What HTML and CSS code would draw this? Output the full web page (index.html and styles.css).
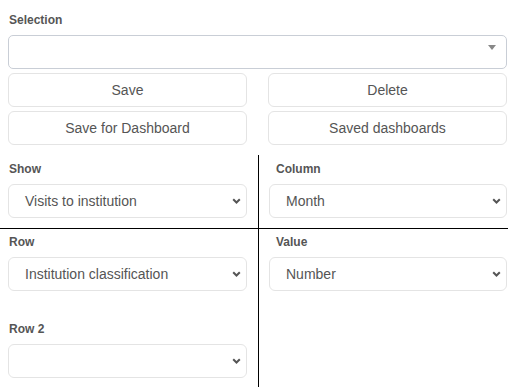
FILE: index.html
```html
<!DOCTYPE html>
<html lang="en">
<head>
    <meta charset="UTF-8">
    <meta name="viewport" content="width=device-width, initial-scale=1.0">
    <title>Report settings</title>
    <link rel="stylesheet" href="styles.css">
</head>
<body>
    <div class="top">
        <label class="field-label">Selection</label>
        <div class="combo">
            <span class="combo-arrow"></span>
        </div>
        <div class="buttons">
            <button class="btn">Save</button>
            <button class="btn">Delete</button>
            <button class="btn">Save for Dashboard</button>
            <button class="btn">Saved dashboards</button>
        </div>
    </div>

    <div class="pivot">
        <div class="cell cell-left cell-first">
            <label class="field-label">Show</label>
            <div class="dropdown">
                <span class="dropdown-text">Visits to institution</span>
                <svg class="chevron" width="9" height="6" viewBox="0 0 9 6"><polyline points="1.2,1.2 4.5,4.5 7.8,1.2" fill="none" stroke="#555" stroke-width="2"/></svg>
            </div>
        </div>
        <div class="cell cell-right cell-first">
            <label class="field-label">Column</label>
            <div class="dropdown">
                <span class="dropdown-text">Month</span>
                <svg class="chevron" width="9" height="6" viewBox="0 0 9 6"><polyline points="1.2,1.2 4.5,4.5 7.8,1.2" fill="none" stroke="#555" stroke-width="2"/></svg>
            </div>
        </div>
        <div class="cell cell-left">
            <label class="field-label">Row</label>
            <div class="dropdown">
                <span class="dropdown-text">Institution classification</span>
                <svg class="chevron" width="9" height="6" viewBox="0 0 9 6"><polyline points="1.2,1.2 4.5,4.5 7.8,1.2" fill="none" stroke="#555" stroke-width="2"/></svg>
            </div>
            <label class="field-label row2">Row 2</label>
            <div class="dropdown">
                <span class="dropdown-text"></span>
                <svg class="chevron" width="9" height="6" viewBox="0 0 9 6"><polyline points="1.2,1.2 4.5,4.5 7.8,1.2" fill="none" stroke="#555" stroke-width="2"/></svg>
            </div>
        </div>
        <div class="cell cell-right">
            <label class="field-label">Value</label>
            <div class="dropdown">
                <span class="dropdown-text">Number</span>
                <svg class="chevron" width="9" height="6" viewBox="0 0 9 6"><polyline points="1.2,1.2 4.5,4.5 7.8,1.2" fill="none" stroke="#555" stroke-width="2"/></svg>
            </div>
        </div>
    </div>
</body>
</html>
```

FILE: styles.css
```css
body {
    font-family: "Liberation Sans", Arial, sans-serif;
    background-color: #fff;
    color: #555;
    margin: 0;
    padding: 0;
}
.top {
    padding: 12px 11px 0 8px;
}
.field-label {
    display: block;
    font-size: 12px;
    font-weight: bold;
    line-height: 17px;
    color: #555;
    margin-left: 1px;
}
.combo {
    height: 34px;
    box-sizing: border-box;
    margin-top: 6px;
    border: 1px solid #c9ced6;
    border-radius: 5px;
    display: flex;
    justify-content: flex-end;
    align-items: center;
    padding-right: 10px;
}
.combo-arrow {
    width: 0;
    height: 0;
    border-style: solid;
    border-width: 5px 4px 0 4px;
    border-color: #888 transparent transparent transparent;
    margin-top: -9px;
}
.buttons {
    display: grid;
    grid-template-columns: 1fr 1fr;
    column-gap: 21px;
    row-gap: 4px;
    margin-top: 4px;
}
.btn {
    height: 34px;
    background: #fff;
    border: 1px solid #e4e4e4;
    border-radius: 6px;
    font-family: "Liberation Sans", Arial, sans-serif;
    font-size: 14px;
    color: #555;
    padding: 0;
}
.pivot {
    display: grid;
    grid-template-columns: 258px 250px;
    margin-top: 10px;
}
.cell {
    padding-top: 5px;
    padding-bottom: 9px;
}
.cell-first {
    border-bottom: 1px solid #000;
    padding-top: 6px;
    padding-bottom: 10px;
}
.cell-left {
    padding-left: 8px;
    padding-right: 11px;
}
.cell-right {
    border-left: 1px solid #000;
    padding-left: 10px;
    padding-right: 1px;
}
.cell-right .field-label {
    margin-left: 7px;
}
.dropdown {
    height: 34px;
    box-sizing: border-box;
    margin-top: 6px;
    border: 1px solid #e4e4e4;
    border-radius: 6px;
    display: flex;
    align-items: center;
    justify-content: space-between;
    padding: 0 5px 0 16px;
}
.dropdown-text {
    font-size: 14px;
    color: #555;
}
.chevron {
    display: block;
}
.row2 {
    margin-top: 30px;
}
```
